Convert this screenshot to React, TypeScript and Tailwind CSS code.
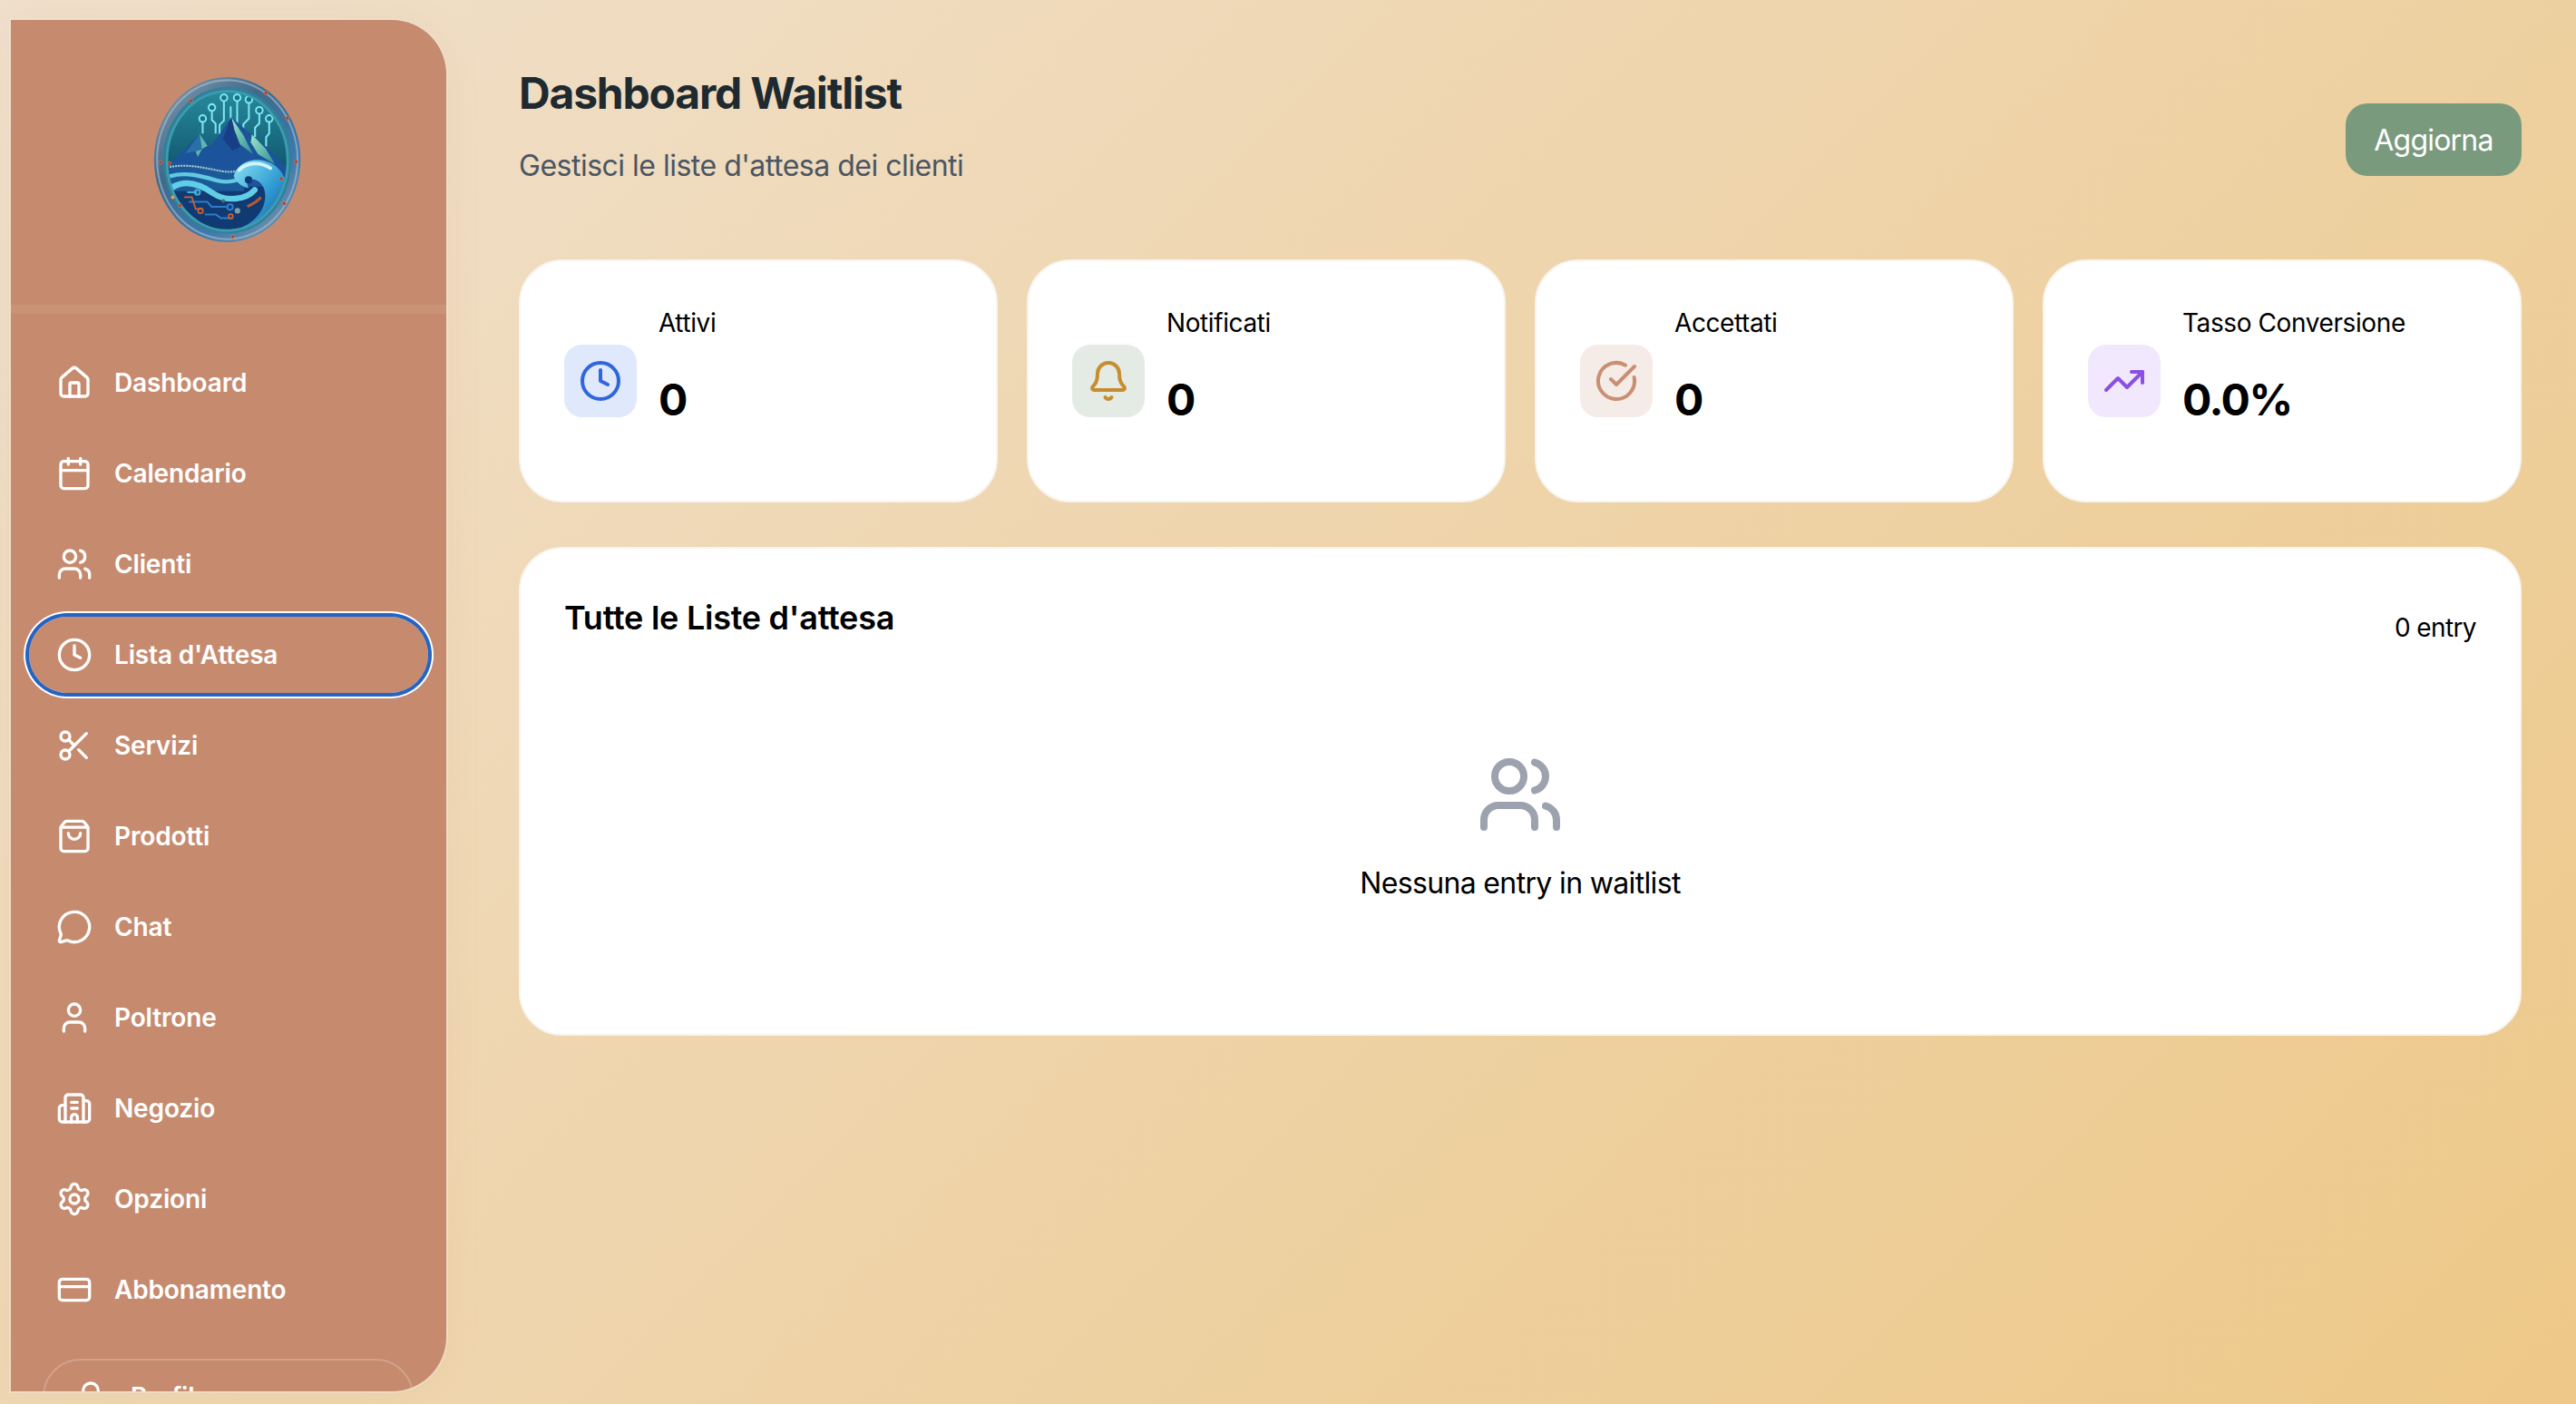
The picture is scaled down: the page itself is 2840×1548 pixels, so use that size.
import type { ReactNode } from 'react';
import {
  Bell,
  Building2,
  Calendar,
  CircleCheckBig,
  Clock,
  CreditCard,
  House,
  MessageCircle,
  Scissors,
  Settings,
  ShoppingBag,
  TrendingUp,
  User,
  UserRound,
  Users,
} from 'lucide-react';

const navItems = [
  { label: 'Dashboard', icon: House },
  { label: 'Calendario', icon: Calendar },
  { label: 'Clienti', icon: Users },
  { label: "Lista d'Attesa", icon: Clock, active: true },
  { label: 'Servizi', icon: Scissors },
  { label: 'Prodotti', icon: ShoppingBag },
  { label: 'Chat', icon: MessageCircle },
  { label: 'Poltrone', icon: User },
  { label: 'Negozio', icon: Building2 },
  { label: 'Opzioni', icon: Settings },
  { label: 'Abbonamento', icon: CreditCard },
];

// Round badge logo: glass rim, circuit sky, mountains and a breaking wave.
function Logo() {
  const rivets = [
    [187, 127], [430, 102], [500, 183], [528, 325], [117, 330], [88, 327],
    [152, 467], [490, 460], [323, 568], [480, 380],
  ];
  const nodes = [
    [294, 117], [337, 117], [375, 123], [255, 149], [409, 158], [225, 185], [441, 185],
  ];
  return (
    <svg width="214" height="214" viewBox="0 0 630 630" className="shrink-0" aria-hidden="true">
      <defs>
        <linearGradient id="rim" x1="0.1" y1="0" x2="0.9" y2="1">
          <stop offset="0" stopColor="#8299ad" />
          <stop offset="0.35" stopColor="#3f6a8c" />
          <stop offset="0.7" stopColor="#3d78ad" />
          <stop offset="1" stopColor="#7d97ab" />
        </linearGradient>
        <linearGradient id="sky" x1="0.5" y1="0" x2="0.5" y2="1">
          <stop offset="0" stopColor="#2a8c9e" />
          <stop offset="0.55" stopColor="#0f5670" />
        </linearGradient>
        <linearGradient id="curl" x1="0" y1="0" x2="1" y2="1">
          <stop offset="0" stopColor="#8ae4f4" />
          <stop offset="0.55" stopColor="#2f9ad2" />
          <stop offset="1" stopColor="#174a92" />
        </linearGradient>
        <linearGradient id="peak" x1="0" y1="0" x2="1" y2="1">
          <stop offset="0" stopColor="#9fe6c8" />
          <stop offset="1" stopColor="#2b8f92" />
        </linearGradient>
        <clipPath id="face">
          <ellipse cx="305" cy="322" rx="196" ry="226" />
        </clipPath>
      </defs>
      <ellipse cx="305" cy="318" rx="238" ry="268" fill="url(#rim)" />
      <ellipse cx="305" cy="318" rx="228" ry="258" fill="none" stroke="#aebfcc" strokeOpacity="0.6" strokeWidth="6" />
      <ellipse cx="305" cy="320" rx="208" ry="238" fill="#2f8098" />
      <g clipPath="url(#face)">
        <rect x="90" y="80" width="430" height="500" fill="url(#sky)" />
        <g stroke="#7be8f0" strokeWidth="6" fill="none" strokeLinejoin="round">
          <path d="M294 129v62l-14 14v30" />
          <path d="M337 129v75" />
          <path d="M375 135v50l-18 18v30" />
          <path d="M255 161v28l12 12v32" />
          <path d="M409 170v30l-14 14v30" />
          <path d="M225 197v36" />
          <path d="M441 197v36l-10 12v30" />
          <path d="M316 145v50" />
        </g>
        <g stroke="#7be8f0" strokeWidth="6" fill="#1a7088">
          {nodes.map(([cx, cy]) => (
            <circle key={`${cx}-${cy}`} cx={cx} cy={cy} r="11" />
          ))}
        </g>
        <path d="M105 345 215 235l35 42 68-97 67 58 50 42 75 75v60H105z" fill="#1c549c" />
        <path d="m318 180 40 60 30 60-42-32-18-46z" fill="url(#peak)" />
        <path d="m215 235 26 38-18 10-14 26-12-32z" fill="#5bb8aa" />
        <path d="m385 236 44 46 32 52-56-34-24-38z" fill="url(#peak)" />
        <path d="m318 180-28 70 32 40 26-14-20-52z" fill="#183f86" />
        <path d="m215 235-46 62 42-8 12-6z" fill="#2a6fa8" />
        <rect x="100" y="405" width="420" height="190" fill="#103a72" />
        <path d="M110 338c60-14 130 2 180 12 30 4 50-2 70-10v80H110z" fill="#1b5a98" />
        <path d="M118 342c60-12 115 4 172 14 30 4 50 0 72-10" fill="none" stroke="#b9c9d4" strokeWidth="6" strokeDasharray="6 3" />
        <path d="M118 372c55-16 105 0 155 14 24 6 52 4 76-6" fill="none" stroke="#63c8e2" strokeWidth="13" />
        <path d="M118 400c50-10 90 6 130 16" fill="none" stroke="#2f88bf" strokeWidth="9" />
        <path d="M128 408c45-28 92-8 132 20 40 26 104 22 134-12" fill="none" stroke="#62cde6" strokeWidth="19" strokeLinecap="round" />
        <path d="M326 372c10-48 74-68 122-42 54 30 66 100 42 146-24 52-94 78-158 70 50-16 94-54 96-108 2-32-20-58-44-56-14 2-18 20-8 28-22 0-42-18-50-38z" fill="url(#curl)" />
        <path d="M343 352c24-24 68-30 102-6" fill="none" stroke="#d2f5fa" strokeWidth="11" strokeLinecap="round" />
        <circle cx="374" cy="384" r="12" fill="#103a72" />
        <g fill="none" stroke="#46aed4" strokeWidth="6">
          <path d="M175 424h32" />
          <circle cx="208" cy="424" r="8" />
        </g>
        <g fill="none" stroke="#2f7ccc" strokeWidth="6">
          <path d="M180 455h60l14 16h50" />
          <circle cx="314" cy="472" r="9" />
          <path d="M232 496h36l16 12h40" />
        </g>
        <g fill="none" stroke="#d0622c" strokeWidth="5">
          <path d="M165 440h25l12 38h22" />
          <circle cx="218" cy="484" r="8" />
          <circle cx="316" cy="502" r="7" />
          <path d="M370 470c14-6 30-14 44-30" strokeWidth="9" strokeOpacity="0.85" />
        </g>
        <circle cx="292" cy="452" r="6" fill="#5a6a62" />
        <circle cx="338" cy="484" r="9" fill="#7f9ea8" />
      </g>
      <ellipse cx="305" cy="322" rx="196" ry="226" fill="none" stroke="#3d9cb0" strokeWidth="8" />
      <g fill="#b83f22" stroke="#d9b5a6" strokeOpacity="0.5" strokeWidth="2">
        {rivets.map(([cx, cy]) => (
          <circle key={`${cx}-${cy}`} cx={cx} cy={cy} r="6" />
        ))}
      </g>
      <circle cx="128" cy="440" r="6" fill="#f09a50" />
    </svg>
  );
}

function Sidebar() {
  return (
    <aside className="ml-3 mt-[22px] mb-[14px] flex w-[480px] shrink-0 flex-col overflow-hidden rounded-r-[60px] bg-[#c68b6f] shadow-[0_0_0_2px_rgba(240,225,205,0.6),0_0_40px_rgba(198,139,111,0.1)]">
      <div className="flex h-[324px] shrink-0 items-center justify-center border-b-[10px] border-[#ca9378] pb-[8px] pl-[4px]">
        <Logo />
      </div>
      <nav className="flex flex-col gap-4 px-5 pt-[34px]">
        {navItems.map(({ label, icon: Icon, active }) => (
          <a
            key={label}
            className={`flex h-[84px] shrink-0 items-center gap-6 rounded-full pl-[30px] text-[28px] font-semibold tracking-[-0.15px] text-white ${
              active ? 'shadow-[0_0_0_4px_#2563c4,0_0_0_6px_#ffffff]' : ''
            }`}
          >
            <Icon size={40} strokeWidth={2} />
            {label}
          </a>
        ))}
      </nav>
      <div className="ml-[35px] mr-9 mt-[34px] flex h-[84px] shrink-0 items-start gap-6 rounded-[42px] border-2 border-white/20 pl-[31px] pt-5 text-[28px] font-semibold leading-10 tracking-[-0.15px] text-white">
        <UserRound size={40} strokeWidth={2} />
        Profilo
      </div>
    </aside>
  );
}

function StatCard({
  label,
  value,
  tint,
  children,
}: {
  label: string;
  value: string;
  tint: string;
  children: ReactNode;
}) {
  return (
    <div className="flex h-[268px] items-center gap-6 rounded-[48px] border-2 border-[#f8f4ef] bg-white px-12">
      <div className={`flex h-20 w-20 shrink-0 items-center justify-center rounded-[20px] ${tint}`}>
        {children}
      </div>
      <div className="self-start pt-12">
        <p className="text-[28px] leading-10 tracking-[-0.4px] text-black">{label}</p>
        <p className="mt-[33px] text-[48px] font-bold leading-16 tracking-[-1.5px] text-black">{value}</p>
      </div>
    </div>
  );
}

export default function App() {
  return (
    <div className="flex h-screen overflow-hidden bg-[linear-gradient(135deg,#f0e0cc,#edc888)] font-['Inter',sans-serif]">
      <Sidebar />
      <main className="flex-1 pl-20 pr-[60px] pt-[71px]">
        <header className="flex items-start justify-between">
          <div>
            <h1 className="text-[48px] font-bold leading-16 tracking-[-1.2px] text-[#1f2a30]">Dashboard Waitlist</h1>
            <p className="mt-6 text-[32px] leading-12 tracking-[-0.5px] text-[#4b5563]">
              Gestisci le liste d'attesa dei clienti
            </p>
          </div>
          <button className="mt-[43px] h-20 w-[194px] rounded-3xl bg-[#7a9a7e] pt-[2px] text-[32px] tracking-[-0.8px] text-white">
            Aggiorna
          </button>
        </header>

        <section className="mt-[79px] grid grid-cols-4 gap-8">
          <StatCard label="Attivi" value="0" tint="bg-[#dfe9fb]">
            <Clock size={48} className="text-[#2f66e0]" />
          </StatCard>
          <StatCard label="Notificati" value="0" tint="bg-[#e4ebe5]">
            <Bell size={48} className="text-[#c68d2f]" />
          </StatCard>
          <StatCard label="Accettati" value="0" tint="bg-[#f5ebe7]">
            <CircleCheckBig size={48} className="text-[#c98f72]" />
          </StatCard>
          <StatCard label="Tasso Conversione" value="0.0%" tint="bg-[#f1e8fe]">
            <TrendingUp size={48} className="text-[#8b4fe3]" />
          </StatCard>
        </section>

        <section className="mt-[49px] rounded-[48px] border-2 border-[#f8f4ef] bg-white px-12 pb-[142px] pt-12">
          <div className="flex items-start justify-between">
            <h2 className="text-[36px] font-semibold leading-14 tracking-[-0.26px] text-black">Tutte le Liste d'attesa</h2>
            <span className="pt-[19px] text-[28px] leading-10 tracking-[-0.6px] text-black">0 entry</span>
          </div>
          <div className="flex flex-col items-center pt-[116px]">
            <Users size={96} className="text-[#9ca3af]" />
            <p className="mt-[26px] text-[32px] leading-12 tracking-[-0.65px] text-black">Nessuna entry in waitlist</p>
          </div>
        </section>
      </main>
    </div>
  );
}
